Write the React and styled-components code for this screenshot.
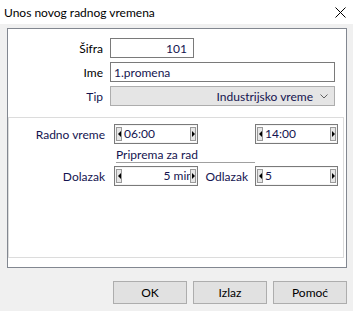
import React from "react";
import styled, { createGlobalStyle } from "styled-components";

const Global = createGlobalStyle`
  html, body { margin: 0; padding: 0; background: #f0f0f0; }
  body { font-family: "Segoe UI", Lato, "Liberation Sans", sans-serif; font-size: 12px; }
  * { box-sizing: border-box; }
`;

const Window = styled.div`
  width: 353px;
  height: 311px;
  background: #f0f0f0;
  display: flex;
  flex-direction: column;
  color: #000;
`;

const TitleBar = styled.div`
  height: 24px;
  background: #fff;
  display: flex;
  align-items: center;
  justify-content: space-between;
  padding: 0 7px 0 4px;
  font-size: 12px;
`;

const Close = styled.svg`
  width: 11px;
  height: 11px;
`;

const Body = styled.div`
  padding: 4px 6px 0 7px;
  display: flex;
  flex-direction: column;
`;

const Panel = styled.div`
  width: 340px;
  height: 240px;
  border: 1px solid #828790;
  background: #fff;
  display: flex;
  flex-direction: column;
  padding: 9px 2px 0 0;
`;

const Form = styled.div`
  display: flex;
  flex-direction: column;
  gap: 4px;
`;

const Row = styled.div`
  display: flex;
  align-items: center;
  gap: 7px;
  height: 20px;
`;

const Label = styled.div`
  width: 95px;
  text-align: right;
  color: ${(p) => p.$color || "#000"};
`;

const TextBox = styled.div`
  width: ${(p) => p.$w}px;
  height: 20px;
  border: 1px solid #7a7a7a;
  background: #fff;
  display: flex;
  align-items: center;
  justify-content: ${(p) => (p.$right ? "flex-end" : "flex-start")};
  padding: 0 6px 0 3px;
  color: #141450;
`;

const Combo = styled.div`
  width: 225px;
  height: 20px;
  border: 1px solid #adadad;
  background: #e5e5e5;
  display: flex;
  align-items: center;
  justify-content: flex-end;
  gap: 7px;
  padding-right: 6px;
  color: #141450;
`;

const Group = styled.div`
  margin-top: 11px;
  height: 141px;
  border: 1px solid #dcdcdc;
  display: grid;
  grid-template-columns: 105px 84px 57px 83px;
  grid-template-rows: 20px 22px 20px;
  padding-top: 6px;
  align-content: start;
`;

const GLabel = styled.div`
  display: flex;
  align-items: center;
  justify-content: flex-end;
  padding-right: ${(p) => p.$pr || 0}px;
  color: #141450;
  grid-column: ${(p) => p.$col || "auto"};
`;

const Spin = styled.div`
  height: 20px;
  border: 1px solid #7a7a7a;
  box-shadow: inset 0 0 0 1px #f4f4f4;
  display: flex;
  align-items: stretch;
  padding: 2px 1px;
  grid-column: ${(p) => p.$col || "auto"};
  background: #fff;
`;

const SpinBtn = styled.div`
  width: 6px;
  flex: none;
  background: #e6e6e6;
  border: 1px solid #9a9a9a;
  display: flex;
  align-items: center;
  justify-content: center;
  position: relative;
  &::after {
    content: "";
    width: 0;
    height: 0;
    border-top: 3px solid transparent;
    border-bottom: 3px solid transparent;
    ${(p) =>
      p.$dir === "left"
        ? "border-right: 3px solid #000;"
        : "border-left: 3px solid #000;"}
  }
`;

const SpinValue = styled.div`
  flex: 1;
  overflow: hidden;
  white-space: nowrap;
  display: flex;
  align-items: center;
  justify-content: ${(p) => (p.$right ? "flex-end" : "flex-start")};
  padding-left: 2px;
  color: #141450;
  line-height: 14px;
`;

const Clipped = styled.span`
  margin-right: -3px;
`;

const Caption = styled.div`
  grid-column: 2 / 4;
  align-self: end;
  margin: 0 0 3px 2px;
  line-height: 15px;
  border-bottom: 1px solid #a0a0a0;
  color: #141450;
`;

const Buttons = styled.div`
  margin-top: 13px;
  display: flex;
  justify-content: flex-end;
  gap: 6px;
`;

const Button = styled.button`
  width: 74px;
  height: 23px;
  border: 1px solid #adadad;
  background: #e1e1e1;
  font-family: inherit;
  font-size: 12px;
  color: #000;
  padding: 0;
`;

const SpinBox = ({ value, right, clip, col }) => (
  <Spin $col={col}>
    <SpinBtn $dir="left" />
    <SpinValue $right={right}>
      {clip ? <Clipped>{value}</Clipped> : value}
    </SpinValue>
    <SpinBtn $dir="right" />
  </Spin>
);

export default function App() {
  return (
    <Window>
      <Global />
      <TitleBar>
        <span>Unos novog radnog vremena</span>
        <Close viewBox="0 0 11 11">
          <path d="M0.5 0.5 L10.5 10.5 M10.5 0.5 L0.5 10.5" stroke="#000" strokeWidth="1" fill="none" />
        </Close>
      </TitleBar>
      <Body>
        <Panel>
          <Form>
            <Row>
              <Label>Šifra</Label>
              <TextBox $w={84} $right>101</TextBox>
            </Row>
            <Row>
              <Label>Ime</Label>
              <TextBox $w={225}>1.promena</TextBox>
            </Row>
            <Row>
              <Label $color="#141450">Tip</Label>
              <Combo>
                <span>Industrijsko vreme</span>
                <svg width="8" height="5" viewBox="0 0 8 5">
                  <path d="M0.5 0.5 L4 4 L7.5 0.5" stroke="#606060" fill="none" />
                </svg>
              </Combo>
            </Row>
          </Form>
          <Group>
            <GLabel $pr={9}>Radno vreme</GLabel>
            <SpinBox value="06:00" />
            <SpinBox value="14:00" col="4" />
            <Caption>Priprema za rad</Caption>
            <GLabel $pr={9} $col="1">Dolazak</GLabel>
            <SpinBox value="5 min" right clip />
            <GLabel $pr={7}>Odlazak</GLabel>
            <SpinBox value="5" />
          </Group>
        </Panel>
        <Buttons>
          <Button>OK</Button>
          <Button>Izlaz</Button>
          <Button>Pomoć</Button>
        </Buttons>
      </Body>
    </Window>
  );
}
